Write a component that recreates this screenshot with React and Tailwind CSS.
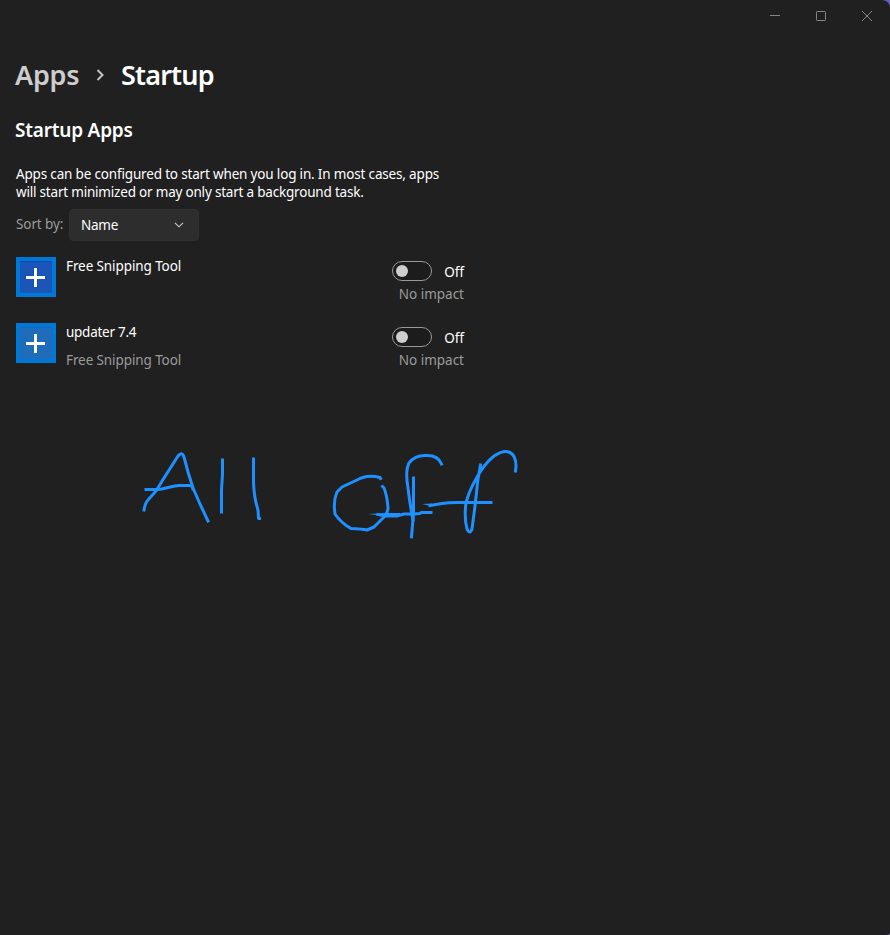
const Caption = ({ children, label }) => (
  <button aria-label={label} className="flex h-8 w-[46px] items-center justify-center text-[#858585]">
    {children}
  </button>
);

function AppIcon({ fill, edge }) {
  return (
    <svg width="40" height="40" viewBox="0 0 40 40" className="shrink-0" shapeRendering="crispEdges">
      <rect width="40" height="40" fill="#0078d7" />
      <rect x="4" y="4" width="32" height="32" fill={fill} />
      <path d="M4 4.5h32" stroke={edge} />
      <path d="M9 18h8v-8h5v8h8v4h-8v8h-5v-8H9z" fill={edge} opacity=".5" />
      <path d="M10 20.5h19M19.5 11v19" stroke="#fff" strokeWidth="3" />
    </svg>
  );
}

function StartupRow({ name, publisher, fill, edge }) {
  return (
    <div className="flex h-[66px] w-[448px] items-start">
      <AppIcon fill={fill} edge={edge} />
      <div className="ml-[10px] w-[326px]">
        <div className="h-[28px] leading-[18px] tracking-[-0.1px] text-white">{name}</div>
        <div className="leading-[18px] tracking-[-0.1px] text-[#9b9b9b]">{publisher}</div>
      </div>
      <div className="w-[72px] pt-1">
        <div className="flex h-5 items-center justify-between">
          <span className="flex h-5 w-10 items-center rounded-full border border-[#9a9a9a] bg-[#1c1c1c] pl-[3px]">
            <span className="h-3 w-3 rounded-full bg-[#cecece]" />
          </span>
          <span className="pt-[2px] leading-[18px] text-white">Off</span>
        </div>
        <div className="mt-1 text-right leading-[18px] text-[#9b9b9b]">No impact</div>
      </div>
    </div>
  );
}

export default function App() {
  return (
    <div className="relative h-[935px] w-[890px] overflow-hidden bg-[#5f5fc4] font-['Noto_Sans','Open_Sans',sans-serif] text-[13.5px]">
      <div className="h-full rounded-tr-lg rounded-br-[3px] bg-[#202020]">
        <header className="flex h-8 justify-end">
          <Caption label="Minimize">
            <svg width="10" height="10" stroke="currentColor"><path d="M0 4.5h10" /></svg>
          </Caption>
          <Caption label="Maximize">
            <svg width="10" height="10" fill="none" stroke="currentColor"><rect x=".5" y=".5" width="9" height="9" rx=".7" /></svg>
          </Caption>
          <Caption label="Close">
            <svg width="10" height="10" stroke="currentColor"><path d="M0 0l10 10M10 0L0 10" /></svg>
          </Caption>
        </header>
        <main className="pl-4">
          <h1 className="-ml-px flex h-[85px] items-center pt-px text-[27px] leading-9 font-semibold">
            <span className="w-[81px] tracking-[-0.25px] text-[#cdcdcd]">Apps</span>
            <svg width="10" height="12" viewBox="0 0 10 12" fill="none" stroke="#c4c4c4" strokeWidth="2" className="mr-[15px]"><path d="M1.500 1L6.500 6 1.500 11" /></svg>
            <span className="tracking-[-0.8px] text-white">Startup</span>
          </h1>
          <h2 className="-ml-px h-[48px] text-[19px] leading-[26px] font-semibold tracking-[-0.2px] text-white">Startup Apps</h2>
          <p className="h-9 leading-[18px] tracking-[-0.17px] whitespace-nowrap text-white">
            Apps can be configured to start when you log in. In most cases, apps<br />
            <span className="tracking-[-0.2px]">will start minimized or may only start a background task.</span>
          </p>
          <div className="mt-2 flex h-8 items-center">
            <span className="w-[53px] pb-[2px] tracking-[-0.1px] whitespace-nowrap text-[#9b9b9b]">Sort by:</span>
            <button className="flex h-8 w-[130px] items-center justify-between rounded-[4px] border border-[#303030] bg-[#2d2d2d] pr-[14px] pl-[11px] text-white">
              <span className="tracking-[-0.25px]">Name</span>
              <svg width="10" height="6" fill="none" stroke="#cfcfcf" strokeWidth="1.1"><path d="M1 .8L5 4.800 9 .8" /></svg>
            </button>
          </div>
          <div className="mt-4">
            <StartupRow name="Free Snipping Tool" fill="#1b55b8" edge="#0c48b4" />
            <StartupRow name={<span className="tracking-[-0.27px]">updater 7.4</span>} publisher="Free Snipping Tool" fill="#1f6cbb" edge="#1467c0" />
          </div>
        </main>
      </div>
      <svg className="pointer-events-none absolute inset-0" width="890" height="935" fill="none" stroke="#1e90ff" strokeWidth="3" strokeLinejoin="round" strokeLinecap="square">
        <path d="M144 510Q145 503 148 500L156 491 164 478 178 456Q182 451 184 457L188 472 193 488 200 504 208 521" />
        <path d="M146 489.500H158C165 489 170 486 179 485.500H190Q193 486 193 489" />
        <path d="M222.500 460V474L221.500 490V512" />
        <path d="M253.500 459V482Q254 498 258 510L258.500 518.500H259.500" />
        <path d="M380.500 478.500L380 477.500Q367 474 357 480L342 487 337 492Q333 501 335 514Q341 523 351 528.500Q362 529 367 530L374 527 384 517Q388 512 388 508Q387 495 384 488L382.500 486.500" />
        <path d="M441.500 464Q438 455 426 455.500Q415 455 409 463Q405 471 408 488Q410 505 413 520" />
        <path d="M413.500 478V514L411.500 537" />
        <path d="M378 514.500L386 516H397L404 514H414L420 513.500 421 512.500H431" />
        <path d="M368 514l18-1h14v3h-14z" fill="#1e90ff" stroke="none" />
        <path d="M422 504l10-.5 1 3z" fill="#1e90ff" stroke="none" />
        <path d="M430 505.500L442 503.500Q449 502.500 457 502.500H491" />
        <path d="M480.500 465L478 479 475 506 472 529Q470 535 467 529Q464 517 466 503Q469 491 476 479Q484 464 494 456Q503 450 509 452Q516 455 516 466L515.500 471" />
      </svg>
    </div>
  );
}
